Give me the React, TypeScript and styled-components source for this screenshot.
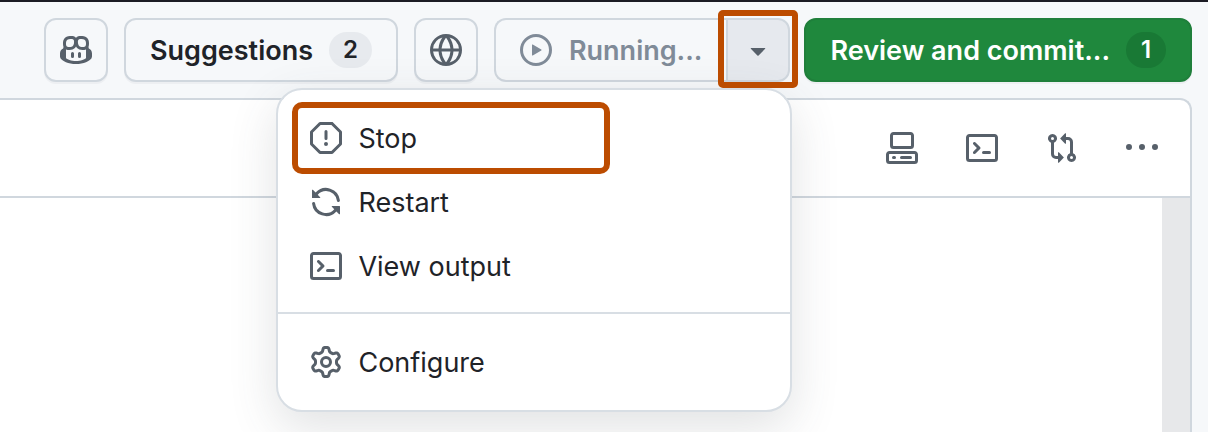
import React from "react";
import styled, { createGlobalStyle, css } from "styled-components";

const color = {
  text: "#1f2328",
  icon: "#57606a",
  muted: "#808b98",
  border: "#d0d7de",
  divider: "#d8dee4",
  canvas: "#f6f8fa",
  green: "#1f883d",
  accent: "#bc4c00",
};

const GlobalStyle = createGlobalStyle`
  *, *::before, *::after { box-sizing: border-box; }
  body {
    margin: 0;
    background: ${color.canvas};
    color: ${color.text};
    font-family: Inter, "Liberation Sans", sans-serif;
    font-size: 27px;
    line-height: 40px;
  }
  button { font: inherit; color: inherit; cursor: pointer; }
`;

const paths = {
  copilot:
    "M8 15C4.2 15 1 13.3.3 12.2 0 11.7 0 11.3 0 10.8V9.7C0 8.6.7 7.6 1.588 7.273c.013-.07.024-.143.036-.218.029-.183.06-.384.126-.612-.201-.508-.254-1.084-.254-1.656 0-.87.128-1.769.693-2.484.579-.733 1.494-1.124 2.724-1.261 1.206-.134 2.262.034 2.944.765.05.053.096.108.139.165.044-.057.094-.112.143-.165.682-.731 1.738-.899 2.944-.765 1.23.137 2.145.528 2.724 1.261.566.715.693 1.614.693 2.484 0 .572-.053 1.148-.254 1.656.066.228.098.429.126.612.012.076.024.148.037.218C15.3 7.6 16 8.6 16 9.7v1.1c0 .5 0 .9-.3 1.4C15 13.3 11.8 15 8 15Zm0-1.45c2.28 0 4.584-1.11 5.002-1.433V7.862l-.023-.116c-.49.21-1.075.291-1.727.291-1.146 0-2.059-.327-2.71-.991A3.222 3.222 0 0 1 8 6.303a3.24 3.24 0 0 1-.544.743c-.65.664-1.563.991-2.71.991-.652 0-1.236-.081-1.727-.291l-.023.116v4.255c.419.323 2.722 1.433 5.002 1.433ZM6.762 2.83c-.193-.206-.637-.413-1.682-.297-1.019.113-1.479.404-1.713.7-.247.312-.369.789-.369 1.554 0 .793.129 1.171.308 1.371.162.181.519.379 1.442.379.853 0 1.339-.235 1.638-.54.315-.322.527-.827.617-1.553.117-.935-.037-1.395-.241-1.614Zm4.155-.297c-1.044-.116-1.488.091-1.681.297-.204.219-.359.679-.242 1.614.091.726.303 1.231.618 1.553.299.305.784.54 1.638.54.922 0 1.28-.198 1.442-.379.179-.2.308-.578.308-1.371 0-.765-.123-1.242-.37-1.554-.233-.296-.693-.587-1.713-.7ZM6.25 9.037a.75.75 0 0 1 .75.75v1.501a.75.75 0 0 1-1.5 0V9.787a.75.75 0 0 1 .75-.75Zm4.25.75v1.501a.75.75 0 0 1-1.5 0V9.787a.75.75 0 0 1 1.5 0Z",
  globe:
    "M8 0a8 8 0 1 1 0 16A8 8 0 0 1 8 0ZM5.78 8.75a9.64 9.64 0 0 0 1.363 4.177c.255.426.542.832.857 1.215.245-.296.551-.705.857-1.215A9.64 9.64 0 0 0 10.22 8.75Zm4.44-1.5a9.64 9.64 0 0 0-1.363-4.177c-.307-.51-.612-.919-.857-1.215a9.927 9.927 0 0 0-.857 1.215A9.64 9.64 0 0 0 5.78 7.25Zm-5.944 1.5H1.543a6.507 6.507 0 0 0 4.666 5.5c-.123-.181-.24-.365-.352-.552-.715-1.192-1.437-2.874-1.581-4.948Zm-2.733-1.5h2.733c.144-2.074.866-3.756 1.58-4.948.12-.197.237-.381.353-.552a6.507 6.507 0 0 0-4.666 5.5Zm10.181 1.5c-.144 2.074-.866 3.756-1.58 4.948-.12.197-.237.381-.353.552a6.507 6.507 0 0 0 4.666-5.5Zm2.733-1.5a6.507 6.507 0 0 0-4.666-5.5c.123.181.24.365.353.552.714 1.192 1.436 2.874 1.58 4.948Z",
  play: "M8 0a8 8 0 1 1 0 16A8 8 0 0 1 8 0ZM1.5 8a6.5 6.5 0 1 0 13 0 6.5 6.5 0 0 0-13 0Zm4.879-2.773 4.264 2.559a.25.25 0 0 1 0 .428l-4.264 2.559A.25.25 0 0 1 6 10.559V5.442a.25.25 0 0 1 .379-.215Z",
  triangleDown:
    "m4.427 7.427 3.396 3.396a.25.25 0 0 0 .354 0l3.396-3.396A.25.25 0 0 0 11.396 7H4.604a.25.25 0 0 0-.177.427Z",
  stop: "M4.47.22A.749.749 0 0 1 5 0h6c.199 0 .389.079.53.22l4.25 4.25c.141.14.22.331.22.53v6a.749.749 0 0 1-.22.53l-4.25 4.25A.749.749 0 0 1 11 16H5a.749.749 0 0 1-.53-.22L.22 11.53A.749.749 0 0 1 0 11V5c0-.199.079-.389.22-.53Zm.84 1.28L1.5 5.31v5.38l3.81 3.81h5.38l3.81-3.81V5.31L10.69 1.5ZM8 4a.75.75 0 0 1 .75.75v3.5a.75.75 0 0 1-1.5 0v-3.5A.75.75 0 0 1 8 4Zm0 8a1 1 0 1 1 0-2 1 1 0 0 1 0 2Z",
  sync: "M1.705 8.005a.75.75 0 0 1 .834.656 5.5 5.5 0 0 0 9.592 2.97l-1.204-1.204a.25.25 0 0 1 .177-.427h3.646a.25.25 0 0 1 .25.25v3.646a.25.25 0 0 1-.427.177l-1.38-1.38A7.002 7.002 0 0 1 1.05 8.84a.75.75 0 0 1 .656-.834ZM8 2.5a5.487 5.487 0 0 0-4.131 1.869l1.204 1.204A.25.25 0 0 1 4.896 6H1.25A.25.25 0 0 1 1 5.75V2.104a.25.25 0 0 1 .427-.177l1.38 1.38A7.002 7.002 0 0 1 14.95 7.16a.75.75 0 0 1-1.49.178A5.5 5.5 0 0 0 8 2.5Z",
  terminal:
    "M0 2.75C0 1.784.784 1 1.75 1h12.5c.966 0 1.75.784 1.75 1.75v10.5A1.75 1.75 0 0 1 14.25 15H1.75A1.75 1.75 0 0 1 0 13.25Zm1.75-.25a.25.25 0 0 0-.25.25v10.5c0 .138.112.25.25.25h12.5a.25.25 0 0 0 .25-.25V2.75a.25.25 0 0 0-.25-.25ZM7.25 8a.749.749 0 0 1-.22.53l-2.25 2.25a.749.749 0 0 1-1.275-.326.749.749 0 0 1 .215-.734L5.44 8 3.72 6.28a.749.749 0 0 1 .326-1.275.749.749 0 0 1 .734.215l2.25 2.25c.141.14.22.331.22.53Zm1.5 1.5h3a.75.75 0 0 1 0 1.5h-3a.75.75 0 0 1 0-1.5Z",
  gear: "M8 0a8.2 8.2 0 0 1 .701.031C9.444.095 9.99.645 10.16 1.29l.288 1.107c.018.066.079.158.212.224.231.114.454.243.668.386.123.082.233.09.299.071l1.103-.303c.644-.176 1.392.021 1.82.63.27.385.506.792.704 1.218.315.675.111 1.422-.364 1.891l-.814.806c-.049.048-.098.147-.088.294.016.257.016.515 0 .772-.01.147.038.246.088.294l.814.806c.475.469.679 1.216.364 1.891a7.977 7.977 0 0 1-.704 1.217c-.428.61-1.176.807-1.82.63l-1.102-.302c-.067-.019-.177-.011-.3.071a5.909 5.909 0 0 1-.668.386c-.133.066-.194.158-.211.224l-.29 1.106c-.168.646-.715 1.196-1.458 1.26a8.006 8.006 0 0 1-1.402 0c-.743-.064-1.289-.614-1.458-1.26l-.289-1.106c-.018-.066-.079-.158-.212-.224a5.738 5.738 0 0 1-.668-.386c-.123-.082-.233-.09-.299-.071l-1.103.303c-.644.176-1.392-.021-1.82-.63a8.12 8.12 0 0 1-.704-1.218c-.315-.675-.111-1.422.363-1.891l.815-.806c.05-.048.098-.147.088-.294a6.214 6.214 0 0 1 0-.772c.01-.147-.038-.246-.088-.294l-.815-.806C.635 6.045.431 5.298.746 4.623a7.92 7.92 0 0 1 .704-1.217c.428-.61 1.176-.807 1.82-.63l1.102.302c.067.019.177.011.3-.071.214-.143.437-.272.668-.386.133-.066.194-.158.211-.224l.29-1.106C6.009.645 6.556.095 7.299.03 7.53.01 7.764 0 8 0Zm-.571 1.525c-.036.003-.108.036-.137.146l-.289 1.105c-.147.561-.549.967-.998 1.189-.173.086-.34.183-.5.29-.417.278-.97.423-1.529.27l-1.103-.303c-.109-.03-.175.016-.195.045-.22.312-.412.644-.573.99-.014.031-.021.11.059.19l.815.806c.411.406.562.957.53 1.456a4.709 4.709 0 0 0 0 .582c.032.499-.119 1.05-.53 1.456l-.815.806c-.081.08-.073.159-.059.19.162.346.353.677.573.989.02.03.085.076.195.046l1.102-.303c.56-.153 1.113-.008 1.53.27.161.107.328.204.501.29.447.222.85.629.997 1.189l.289 1.105c.029.109.101.143.137.146a6.6 6.6 0 0 0 1.142 0c.036-.003.108-.036.137-.146l.289-1.105c.147-.561.549-.967.998-1.189.173-.086.34-.183.5-.29.417-.278.97-.423 1.529-.27l1.103.303c.109.029.175-.016.195-.045.22-.313.411-.644.573-.99.014-.031.021-.11-.059-.19l-.815-.806c-.411-.406-.562-.957-.53-1.456a4.709 4.709 0 0 0 0-.582c-.032-.499.119-1.05.53-1.456l.815-.806c.081-.08.073-.159.059-.19a6.464 6.464 0 0 0-.573-.989c-.02-.03-.085-.076-.195-.046l-1.102.303c-.56.153-1.113.008-1.53-.27a4.44 4.44 0 0 0-.501-.29c-.447-.222-.85-.629-.997-1.189l-.289-1.105c-.029-.11-.101-.143-.137-.146a6.6 6.6 0 0 0-1.142 0ZM11 8a3 3 0 1 1-6 0 3 3 0 0 1 6 0ZM9.5 8a1.5 1.5 0 1 0-3.001.001A1.5 1.5 0 0 0 9.5 8Z",
  codespaces:
    "M0 11.25c0-.966.784-1.75 1.75-1.75h12.5c.966 0 1.75.784 1.75 1.75v3A1.75 1.75 0 0 1 14.25 16H1.75A1.75 1.75 0 0 1 0 14.25Zm2-9.5C2 .784 2.784 0 3.75 0h8.5C13.216 0 14 .784 14 1.75v5a1.75 1.75 0 0 1-1.75 1.75h-8.5A1.75 1.75 0 0 1 2 6.75Zm1.75-.25a.25.25 0 0 0-.25.25v5c0 .138.112.25.25.25h8.5a.25.25 0 0 0 .25-.25v-5a.25.25 0 0 0-.25-.25Zm-2 9.5a.25.25 0 0 0-.25.25v3c0 .138.112.25.25.25h12.5a.25.25 0 0 0 .25-.25v-3a.25.25 0 0 0-.25-.25ZM7 12.75a.75.75 0 0 1 .75-.75h4.5a.75.75 0 0 1 0 1.5h-4.5a.75.75 0 0 1-.75-.75Zm-4 0a.75.75 0 0 1 .75-.75h.5a.75.75 0 0 1 0 1.5h-.5a.75.75 0 0 1-.75-.75Z",
  gitCompare:
    "M9.573.677A.25.25 0 0 1 10 .854V2.5h1A2.5 2.5 0 0 1 13.5 5v5.628a2.251 2.251 0 1 1-1.5 0V5a1 1 0 0 0-1-1h-1v1.646a.25.25 0 0 1-.427.177L7.177 3.427a.25.25 0 0 1 0-.354ZM6 12v-1.646a.25.25 0 0 1 .427-.177l2.396 2.396a.25.25 0 0 1 0 .354l-2.396 2.396A.25.25 0 0 1 6 15.146V13.5H5A2.5 2.5 0 0 1 2.5 11V5.372a2.25 2.25 0 1 1 1.5 0V11a1 1 0 0 0 1 1ZM4 3.25a.75.75 0 1 0-1.5 0 .75.75 0 0 0 1.5 0ZM12.75 12a.75.75 0 1 0 0 1.5.75.75 0 0 0 0-1.5Z",
  kebab:
    "M8 9a1.5 1.5 0 1 0 0-3 1.5 1.5 0 0 0 0 3ZM1.5 9a1.5 1.5 0 1 0 0-3 1.5 1.5 0 0 0 0 3Zm13 0a1.5 1.5 0 1 0 0-3 1.5 1.5 0 0 0 0 3Z",
};

type IconName = keyof typeof paths;

const IconSvg = styled.svg`
  display: block;
  flex: none;
  width: 32px;
  height: 32px;
  fill: currentColor;
`;

function Icon({ name }: { name: IconName }) {
  return (
    <IconSvg viewBox="0 0 16 16" aria-hidden="true">
      <path d={paths[name]} />
    </IconSvg>
  );
}

const Page = styled.div`
  display: flex;
  flex-direction: column;
  min-height: 100vh;
  padding-right: 16px;
  border-top: 2px solid #1c1c24;
  overflow: hidden;
`;

const Toolbar = styled.header`
  position: relative;
  z-index: 1;
  display: flex;
  justify-content: flex-end;
  gap: 14px;
  padding: 16px 0;
`;

const ToolGroup = styled.div`
  display: flex;
  gap: 16px;
`;

const buttonBase = css`
  display: flex;
  align-items: center;
  height: 64px;
  border: 2px solid ${color.border};
  border-radius: 12px;
  background: ${color.canvas};
  font-weight: 600;
  white-space: nowrap;
`;

const IconButton = styled.button`
  ${buttonBase}
  justify-content: center;
  width: 64px;
  padding: 0;
  color: ${color.icon};
  box-shadow: 0 2px 0 rgba(31, 35, 40, 0.04);
`;

const TextButton = styled.button<{ $primary?: boolean }>`
  ${buttonBase}
  gap: 16px;
  padding: 0 24px;
  box-shadow: 0 2px 0 rgba(31, 35, 40, 0.04);
  ${(p) =>
    p.$primary &&
    css`
      color: #ffffff;
      background: ${color.green};
      border-color: #1f7f3b;
    `}
`;

const Label = styled.span`
  padding-top: 2px;
`;

const Counter = styled.span<{ $primary?: boolean }>`
  min-width: 40px;
  padding: 0 14px;
  border-radius: 18px;
  background: ${(p) => (p.$primary ? "#197935" : "#e7eaee")};
  font-size: 24px;
  line-height: 36px;
  text-align: center;
`;

const SplitButton = styled.div`
  position: relative;
  display: flex;
`;

const RunButton = styled.button`
  ${buttonBase}
  gap: 17px;
  padding: 0 24px;
  border-right: 0;
  border-radius: 12px 0 0 12px;
  color: ${color.muted};
`;

const CaretButton = styled.button`
  ${buttonBase}
  position: relative;
  justify-content: center;
  width: 64px;
  padding: 0;
  border-radius: 0 12px 12px 0;
  background: #e6e9ee;
  color: ${color.icon};
`;

const Highlight = styled.span<{ $inset: string; $radius: number }>`
  position: absolute;
  z-index: 2;
  inset: ${(p) => p.$inset};
  border: 6px solid ${color.accent};
  border-radius: ${(p) => p.$radius}px;
  pointer-events: none;
`;

const Menu = styled.div`
  position: absolute;
  top: 70px;
  right: -2px;
  width: 516px;
  padding: 16px 0;
  border: 2px solid ${color.divider};
  border-radius: 26px;
  background: #ffffff;
  background-clip: padding-box;
  box-shadow: 0 16px 48px rgba(66, 74, 83, 0.16);
`;

const MenuItem = styled.button`
  position: relative;
  display: flex;
  align-items: center;
  gap: 16px;
  width: 100%;
  height: 64px;
  padding: 0 32px;
  border: 0;
  background: none;
  text-align: left;

  ${IconSvg} { color: ${color.icon}; }
`;

const MenuDivider = styled.hr`
  height: 2px;
  margin: 14px 0 16px;
  border: 0;
  background: ${color.divider};
`;

const Panel = styled.main`
  display: flex;
  flex: 1;
  flex-direction: column;
  border: 2px solid ${color.border};
  border-width: 2px 2px 0 0;
  border-top-right-radius: 12px;
  background: #ffffff;
`;

const PanelActions = styled.div`
  display: flex;
  justify-content: flex-end;
  gap: 48px;
  padding: 32px;
  border-bottom: 2px solid ${color.border};
`;

const PanelAction = styled.button`
  padding: 0;
  border: 0;
  background: none;
  color: ${color.icon};
`;

const Editor = styled.div`
  flex: 1;
  min-height: 160px;
  border-right: 28px solid #e7e8ea;
`;

const menuItems: { label: string; icon: IconName; highlighted?: boolean }[] = [
  { label: "Stop", icon: "stop", highlighted: true },
  { label: "Restart", icon: "sync" },
  { label: "View output", icon: "terminal" },
];

const panelActions: { label: string; icon: IconName }[] = [
  { label: "Codespace", icon: "codespaces" },
  { label: "Terminal", icon: "terminal" },
  { label: "Compare changes", icon: "gitCompare" },
  { label: "More options", icon: "kebab" },
];

export default function App() {
  return (
    <>
      <GlobalStyle />
      <Page>
        <Toolbar>
          <ToolGroup>
            <IconButton aria-label="Copilot">
              <Icon name="copilot" />
            </IconButton>
            <TextButton>
              <Label>Suggestions</Label>
              <Counter>2</Counter>
            </TextButton>
            <IconButton aria-label="Open in browser">
              <Icon name="globe" />
            </IconButton>
            <SplitButton>
              <RunButton>
                <Icon name="play" />
                <Label>Running...</Label>
              </RunButton>
              <CaretButton aria-label="Run options" aria-haspopup="menu" aria-expanded="true">
                <Icon name="triangleDown" />
                <Highlight $inset="-10px -10px -8px" $radius={5} />
              </CaretButton>
              <Menu role="menu">
                {menuItems.map(({ label, icon, highlighted }) => (
                  <MenuItem role="menuitem" key={label}>
                    <Icon name={icon} />
                    <Label>{label}</Label>
                    {highlighted && <Highlight $inset="-4px 180px -4px 14px" $radius={10} />}
                  </MenuItem>
                ))}
                <MenuDivider />
                <MenuItem role="menuitem">
                  <Icon name="gear" />
                  <Label>Configure</Label>
                </MenuItem>
              </Menu>
            </SplitButton>
          </ToolGroup>
          <TextButton $primary>
            <Label>Review and commit...</Label>
            <Counter $primary>1</Counter>
          </TextButton>
        </Toolbar>
        <Panel>
          <PanelActions>
            {panelActions.map(({ label, icon }) => (
              <PanelAction key={label} aria-label={label}>
                <Icon name={icon} />
              </PanelAction>
            ))}
          </PanelActions>
          <Editor />
        </Panel>
      </Page>
    </>
  );
}
